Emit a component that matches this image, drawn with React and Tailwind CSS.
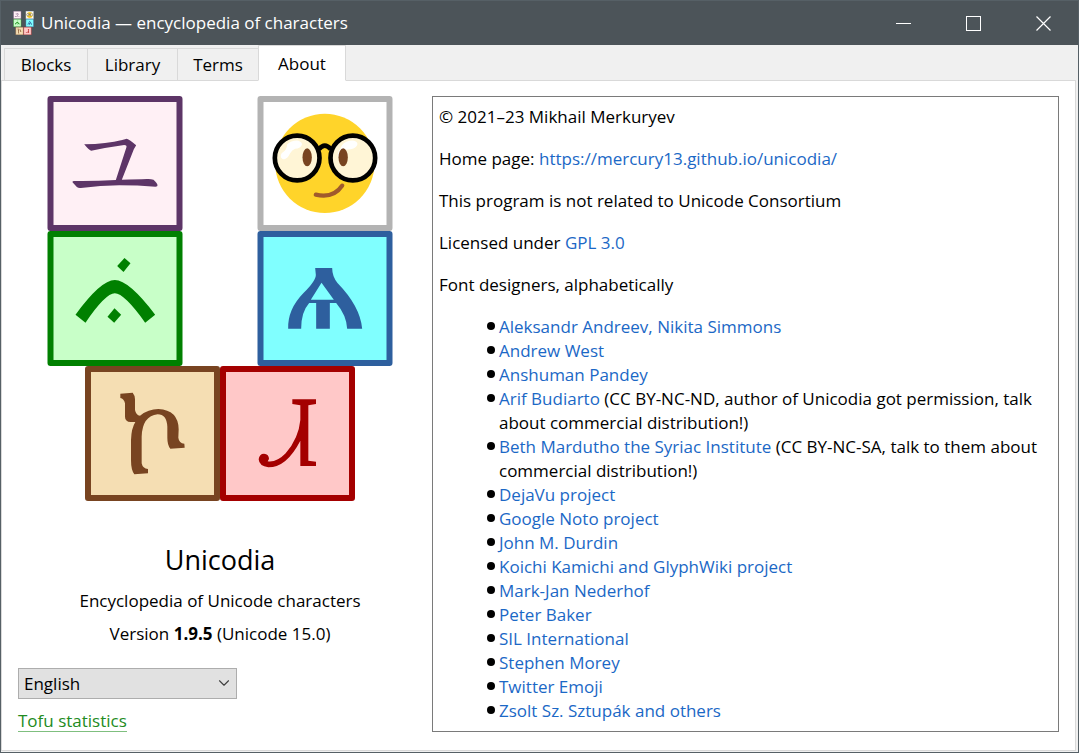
/**
 * Unicodia: main window with the About tab open.
 */
import React, { useState } from "react";
import { ChevronDown } from "lucide-react";

const tabs = [
  { name: "Blocks", width: "w-[84px]" },
  { name: "Library", width: "w-[91px]" },
  { name: "Terms", width: "w-[82px]" },
  { name: "About", width: "w-[88px]" },
];

const designers = [
  { name: "Aleksandr Andreev, Nikita Simmons" },
  { name: "Andrew West" },
  { name: "Anshuman Pandey" },
  {
    name: "Arif Budiarto",
    note: "(CC BY-NC-ND, author of Unicodia got permission, talk about commercial distribution!)",
  },
  {
    name: "Beth Mardutho the Syriac Institute",
    note: "(CC BY-NC-SA, talk to them about commercial distribution!)",
  },
  { name: "DejaVu project" },
  { name: "Google Noto project" },
  { name: "John M. Durdin" },
  { name: "Koichi Kamichi and GlyphWiki project" },
  { name: "Mark-Jan Nederhof" },
  { name: "Peter Baker" },
  { name: "SIL International" },
  { name: "Stephen Morey" },
  { name: "Twitter Emoji" },
  { name: "Zsolt Sz. Sztupák and others" },
];

// One toy block of the logo, 405 units wide
function Cube({ x, y, color, fill, children }) {
  return (
    <g transform={`translate(${x} ${y})`} fill={color}>
      <rect x="9" y="9" width="387" height="387" fill={fill} stroke={color} strokeWidth="18" strokeLinejoin="round" />
      {children}
    </g>
  );
}

function Logo({ className }) {
  return (
    <svg viewBox="0 0 1038 1215" className={className} aria-hidden="true">
      <Cube x={1.5} y={0} color="#5d3567" fill="#fff0f5">
        <path d="M110 145Q178 144 224 132L238 128Q246 130 266 148L259 160L223 251Q270 250 298 249Q308 248 318 251Q330 262 330 268Q331 272 324 272Q270 268 215 268Q160 269 100 276Q93 277 88 273L75 259Q74 255 80 255Q140 256 205 252L237 153Q238 147 230 147Q180 154 131 164Q124 162 110 145Z" />
      </Cube>

      {/* Nerd face */}
      <Cube x={631.5} y={0} color="#b3b3b3" fill="#ffffff">
        <circle cx="202" cy="202" r="149" fill="#ffd42a" />
        <g fill="#fff5d6" stroke="#000000" strokeWidth="14">
          <circle cx="119" cy="186" r="67" />
          <circle cx="286" cy="186" r="67" />
          <path d="M184 160Q202 138 220 160" fill="none" />
        </g>
        <path
          fill="#ffffff"
          d="M70 182Q68 172 82 164Q90 152 88 146Q103 132 123 134Q136 140 133 147Q128 158 113 158Q103 162 98 172Q90 188 81 190Q71 189 70 182Z"
        />
        <path fill="#ffffff" d="M241 182Q240 168 248 160Q254 138 276 134Q298 131 300 144Q298 156 280 160Q262 160 254 166Q248 184 241 182Z" />
        <ellipse cx="149" cy="184" rx="14" ry="27" fill="#784421" />
        <ellipse cx="257" cy="184" rx="14" ry="27" fill="#784421" />
        <path d="M175 296Q228 308 254 269" fill="none" stroke="#a05a2c" strokeWidth="13" strokeLinecap="round" />
      </Cube>

      <Cube x={1.5} y={405} color="#008000" fill="#c8ffc8">
        <path d="M84 251Q160 147 202 147Q244 147 323 251L293 275Q230 187 202 187Q174 187 114 275Z" />
        <path d="M231 81L249 97L228 123L209 105Z" />
        <path d="M201 232L221 251L200 275L180 257Z" />
      </Cube>

      <Cube x={631.5} y={405} color="#2e5f9e" fill="#80ffff">
        <path
          fillRule="evenodd"
          d="M173 111H224Q224 136 240 156Q308 226 314 293H269Q267 253 236 216H217V293H176V216H155Q131 243 131 293H92Q90 235 138 186Q176 148 175 131ZM192 155L229 206H160Z"
        />
      </Cube>

      <Cube x={114} y={810} color="#784421" fill="#f5deb3">
        <path d="M106 83L143 80Q150 88 150 100V132Q153 148 165 149Q190 129 220 129Q280 132 281 190L280 215Q282 232 298 233L299 245L256 248Q247 237 247 215V182Q245 145 218 145Q172 150 170 212V292Q173 308 189 309V322L148 325Q138 312 138 282V222Q139 187 151 168H137Q120 167 120 152V112Q117 98 106 96Z" />
      </Cube>

      <Cube x={519} y={810} color="#a40000" fill="#ffc8c8">
        <path d="M217 100H288V114L265 118V284L288 287V300H241V224Q200 304 145 304Q117 300 116 280Q118 263 132 263Q147 264 147 279L143 286Q170 290 197 262Q236 217 241 162V118L217 114Z" />
      </Cube>
    </svg>
  );
}

function TitleBar() {
  return (
    <header className="flex h-11 items-center bg-[#4c5459] pl-3 text-white">
      <Logo className="h-6 w-[21px]" />
      <h1 className="ml-[7px] flex-1">Unicodia — encyclopedia of characters</h1>
      <div className="flex h-full">
        <button aria-label="Minimize" className="flex w-[70px] items-center justify-center">
          <svg viewBox="0 0 15 15" className="size-[15px]" fill="none" stroke="currentColor">
            <path d="M0 7.5H15" />
          </svg>
        </button>
        <button aria-label="Maximize" className="flex w-[70px] items-center justify-center">
          <svg viewBox="0 0 15 15" className="size-[15px]" fill="none" stroke="currentColor">
            <rect x="0.5" y="0.5" width="14" height="14" />
          </svg>
        </button>
        <button aria-label="Close" className="flex w-[70px] items-center justify-center">
          <svg viewBox="0 0 15 15" className="size-[15px]" fill="none" stroke="currentColor" strokeWidth="1.2">
            <path d="M0.5 0.5L14.5 14.5M14.5 0.5L0.5 14.5" />
          </svg>
        </button>
      </div>
    </header>
  );
}

function TabBar({ current, onSelect }) {
  return (
    <div role="tablist" className="z-10 -mb-px flex h-9 items-end pl-[3px]">
      {tabs.map(({ name, width }) => (
        <button
          key={name}
          role="tab"
          aria-selected={name === current}
          onClick={() => onSelect(name)}
          className={`${width} -mr-px border border-[#d9d9d9] pt-px ${
            name === current ? "z-10 h-9 border-b-white bg-white" : "h-[33px] bg-[#f0f0f0]"
          }`}
        >
          {name}
        </button>
      ))}
    </div>
  );
}

function Link({ href = "#", children }) {
  return (
    <a href={href} className="text-[#1b68c6]">
      {children}
    </a>
  );
}

export default function App() {
  const [tab, setTab] = useState("About");

  return (
    <div className="flex min-h-screen flex-col border border-[#566066] bg-[#f0f0f0] font-['Open_Sans',sans-serif] text-[17px] leading-6 text-black">
      <TitleBar />
      <TabBar current={tab} onSelect={setTab} />

      <main className="mr-[2px] mb-px flex flex-1 gap-[10px] border border-[#d9d9d9] bg-white px-4 pt-[15px] pb-[18px]">
        {/* Logo, version and language */}
        <section className="flex w-[404px] shrink-0 flex-col">
          <div className="flex flex-col items-center">
            <Logo className="h-[405px] w-[346px]" />
            <h2 className="mt-[39px] text-[27px] leading-10">Unicodia</h2>
            <p className="mt-[9px]">Encyclopedia of Unicode characters</p>
            <p className="mt-[9px]">
              Version <b>1.9.5</b> (Unicode 15.0)
            </p>
          </div>

          <div className="mt-auto flex flex-col items-start">
            <div className="relative">
              <select
                aria-label="Language"
                className="h-[31px] w-[219px] appearance-none border border-[#adadad] bg-[#e1e1e1] pt-px pl-[5px]"
              >
                <option>English</option>
              </select>
              <ChevronDown
                size={18}
                strokeWidth={1.5}
                className="pointer-events-none absolute top-[6px] right-1 text-[#404040]"
              />
            </div>
            <a href="#tofu" className="mt-3 border-b border-[#7fbf7f] leading-5 text-[#228b22]">
              Tofu statistics
            </a>
          </div>
        </section>

        {/* Credits */}
        <section className="flex-1 border border-[#7a7a7a] px-[6px] py-2">
          <div className="flex flex-col gap-[18px]">
            <p>© 2021–23 Mikhail Merkuryev</p>
            <p>
              Home page:{" "}
              <Link href="https://mercury13.github.io/unicodia/">https://mercury13.github.io/unicodia/</Link>
            </p>
            <p>This program is not related to Unicode Consortium</p>
            <p>
              Licensed under <Link>GPL 3.0</Link>
            </p>
            <p>Font designers, alphabetically</p>
            <ul className="pl-12">
              {designers.map(({ name, note }) => (
                <li key={name} className="flex gap-1">
                  <span className="mt-[7px] size-2 shrink-0 rounded-full bg-black" />
                  <span>
                    <Link>{name}</Link>
                    {note && ` ${note}`}
                  </span>
                </li>
              ))}
            </ul>
          </div>
        </section>
      </main>
    </div>
  );
}
